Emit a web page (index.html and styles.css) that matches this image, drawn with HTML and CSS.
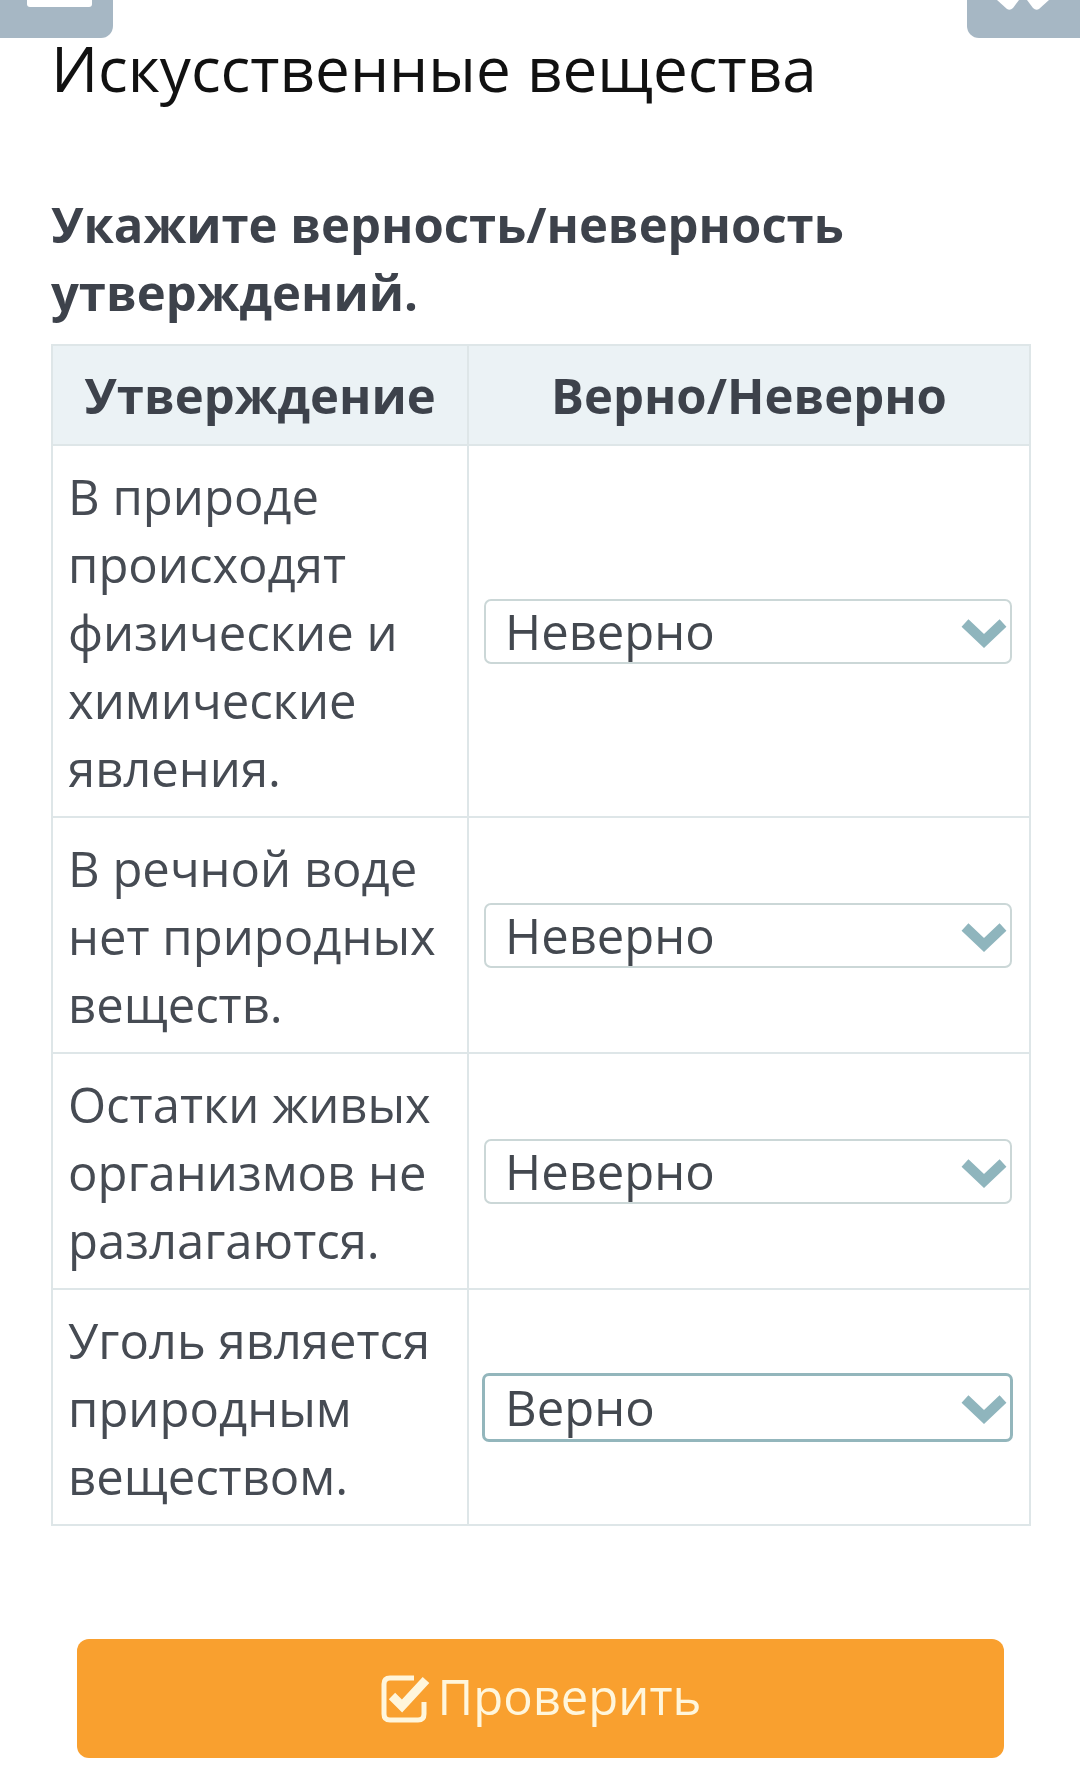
FILE: index.html
```html
<!DOCTYPE html>
<html lang="ru">
<head>
<meta charset="utf-8">
<title>Искусственные вещества</title>
<link rel="stylesheet" href="styles.css">
</head>
<body>
<div class="topbar">
  <div class="tab tab-left"><span class="tab-mark"></span></div>
  <div class="tab tab-right">
    <svg class="tab-icon" width="60" height="10" viewBox="0 0 60 10"><path d="M4 0 L14 9 Q17 11 20 8 L26 0 Z" fill="#fff"/><path d="M34 0 L40 8 Q43 11 46 9 L56 0 Z" fill="#fff"/></svg>
  </div>
</div>
<main class="page">
  <h1 class="title">Искусственные вещества</h1>
  <h2 class="task">Укажите верность/неверность утверждений.</h2>
  <table class="quiz">
    <colgroup><col class="col-a"><col class="col-b"></colgroup>
    <thead>
      <tr><th>Утверждение</th><th>Верно/Неверно</th></tr>
    </thead>
    <tbody>
      <tr>
        <td class="stmt">В природе происходят физические и химические явления.</td>
        <td class="ans"><div class="select"><span>Неверно</span><svg class="chev" width="46" height="30" viewBox="0 0 46 30"><polyline points="4,4 23,22 42,4" fill="none" stroke="#8fb5bd" stroke-width="10"/></svg></div></td>
      </tr>
      <tr>
        <td class="stmt">В речной воде нет природных веществ.</td>
        <td class="ans"><div class="select"><span>Неверно</span><svg class="chev" width="46" height="30" viewBox="0 0 46 30"><polyline points="4,4 23,22 42,4" fill="none" stroke="#8fb5bd" stroke-width="10"/></svg></div></td>
      </tr>
      <tr>
        <td class="stmt">Остатки живых организмов не разлагаются.</td>
        <td class="ans"><div class="select"><span>Неверно</span><svg class="chev" width="46" height="30" viewBox="0 0 46 30"><polyline points="4,4 23,22 42,4" fill="none" stroke="#8fb5bd" stroke-width="10"/></svg></div></td>
      </tr>
      <tr>
        <td class="stmt">Уголь является природным веществом.</td>
        <td class="ans"><div class="select select-focus"><span>Верно</span><svg class="chev" width="46" height="30" viewBox="0 0 46 30"><polyline points="4,4 23,22 42,4" fill="none" stroke="#8fb5bd" stroke-width="10"/></svg></div></td>
      </tr>
    </tbody>
  </table>
  <div class="actions">
    <button class="check-btn" type="button">
      <svg class="check-icon" width="52" height="52" viewBox="0 0 52 52">
        <path d="M34 5 H10 Q4 5 4 11 V41 Q4 47 10 47 H38 Q44 47 44 41 V29" fill="none" stroke="#fff6dc" stroke-width="5"/>
        <polyline points="12,23 22,33 46,7" fill="none" stroke="#fff6dc" stroke-width="9"/>
      </svg>
      <span>Проверить</span>
    </button>
  </div>
</main>
</body>
</html>
```
FILE: styles.css
```css
* { box-sizing: border-box; }
html, body { margin: 0; padding: 0; background: #fff; }
body { font-family: "Open Sans", "Noto Sans", sans-serif; color: #454a52; }

.topbar { display: flex; justify-content: space-between; height: 38px; }
.tab { width: 113px; height: 38px; background: #a6b7c4; position: relative; }
.tab-left { border-radius: 0 0 12px 0; }
.tab-right { border-radius: 0 0 0 12px; }
.tab-mark { position: absolute; left: 27px; top: 0; width: 65px; height: 7px; background: #fff; border-radius: 0 0 3px 3px; }
.tab-icon { position: absolute; left: 26px; top: 0; }

.page { padding: 0 49px 0 51px; }
.title { margin: -2px 0 0 0; font-size: 62px; line-height: 64px; font-weight: 400; color: #111; }
.task { margin: 90px 0 18px 0; font-size: 49px; line-height: 68px; font-weight: 700; color: #3d424b; }

.quiz { width: 100%; border-collapse: collapse; table-layout: fixed; }
.col-a { width: 416px; }
.quiz th, .quiz td { border: 2px solid #dee6e8; }
.quiz th { background: #ebf2f5; font-size: 49px; line-height: 68px; font-weight: 700; color: #3d424b; padding: 15px 6px; text-align: center; }
.quiz td { vertical-align: middle; }
.stmt { font-size: 49px; line-height: 68px; padding: 16px 8px 14px 15px; color: #464b53; }
.ans { padding: 0 17px 0 15px; }

.select { display: flex; align-items: center; justify-content: space-between; height: 65px; border: 2px solid #cbd7d7; border-radius: 7px; padding: 0 3px 0 19px; font-size: 49px; color: #43484f; }
.select span { line-height: 60px; }
.select-focus { height: 69px; border: 3px solid #93b6bc; margin: 0 -1px 0 -2px; padding-left: 20px; padding-right: 3px; }
.chev { display: block; margin-top: 6px; }

.actions { padding: 113px 27px 0 26px; }
.check-btn { display: flex; align-items: center; justify-content: center; gap: 6px; width: 100%; height: 119px; border: 0; border-radius: 12px; background: #f9a02f; color: #fff6dc; font-family: "Open Sans", "Noto Sans", sans-serif; font-size: 49px; padding: 0; }
.check-btn span { line-height: 1; margin-top: -4px; }
.check-icon { display: block; }
```
